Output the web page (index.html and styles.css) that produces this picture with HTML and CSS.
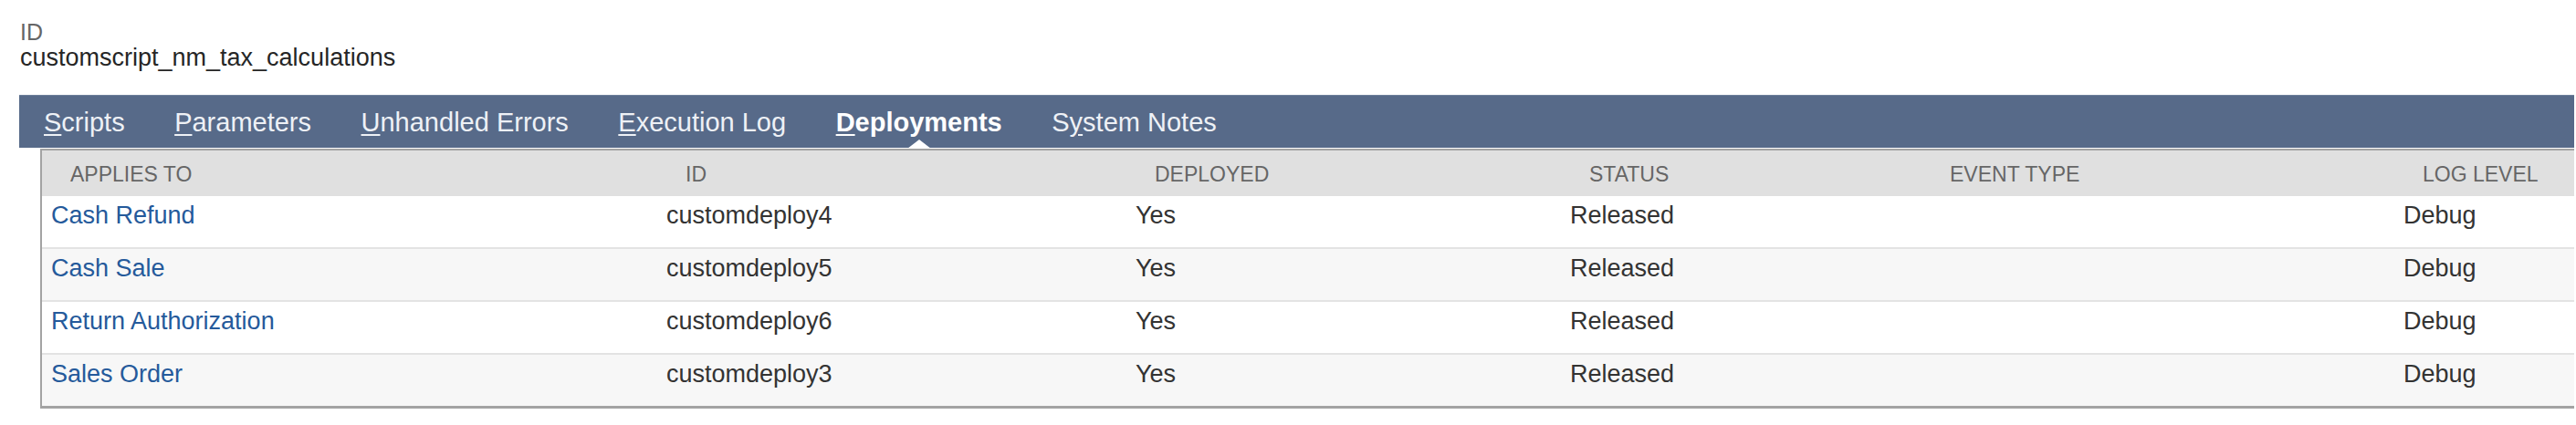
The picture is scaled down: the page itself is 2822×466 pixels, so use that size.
FILE: index.html
```html
<!DOCTYPE html>
<html lang="en">
<head>
<meta charset="utf-8">
<title>Script - Deployments</title>
<link rel="stylesheet" href="styles.css">
</head>
<body>
<div class="page">
  <div class="field">
    <div class="field-label">ID</div>
    <div class="field-value">customscript_nm_tax_calculations</div>
  </div>

  <nav class="tabs">
    <span class="tab"><u>S</u>cripts</span>
    <span class="tab"><u>P</u>arameters</span>
    <span class="tab"><u>U</u>nhandled Errors</span>
    <span class="tab"><u>E</u>xecution Log</span>
    <span class="tab active"><u>D</u>eployments</span>
    <span class="tab">S<u>y</u>stem Notes</span>
  </nav>

  <div class="grid-wrap">
    <table class="grid">
      <colgroup>
        <col class="c1"><col class="c2"><col class="c3"><col class="c4"><col class="c5"><col class="c6">
      </colgroup>
      <thead>
        <tr>
          <th>Applies To</th>
          <th>ID</th>
          <th>Deployed</th>
          <th>Status</th>
          <th>Event Type</th>
          <th>Log Level</th>
        </tr>
      </thead>
      <tbody>
        <tr>
          <td><a href="#">Cash Refund</a></td>
          <td>customdeploy4</td>
          <td>Yes</td>
          <td>Released</td>
          <td></td>
          <td>Debug</td>
        </tr>
        <tr>
          <td><a href="#">Cash Sale</a></td>
          <td>customdeploy5</td>
          <td>Yes</td>
          <td>Released</td>
          <td></td>
          <td>Debug</td>
        </tr>
        <tr>
          <td><a href="#">Return Authorization</a></td>
          <td>customdeploy6</td>
          <td>Yes</td>
          <td>Released</td>
          <td></td>
          <td>Debug</td>
        </tr>
        <tr>
          <td><a href="#">Sales Order</a></td>
          <td>customdeploy3</td>
          <td>Yes</td>
          <td>Released</td>
          <td></td>
          <td>Debug</td>
        </tr>
      </tbody>
    </table>
  </div>
</div>
</body>
</html>
```

FILE: styles.css
```css
html, body {
  margin: 0;
  padding: 0;
  background: #ffffff;
}

body {
  font-family: "Liberation Sans", Arial, Helvetica, sans-serif;
  color: #333333;
}

.page {
  padding: 21px 2px 0 21px;
}

.field {
  padding-left: 1px;
}

.field-label {
  font-size: 25px;
  line-height: 28px;
  color: #666666;
}

.field-value {
  font-size: 27px;
  line-height: 28px;
  color: #262626;
}

.tabs {
  margin-top: 27px;
  height: 58px;
  background: #576a89;
  border-top: 1px solid #6d7f9b;
  box-sizing: border-box;
  display: flex;
  align-items: center;
  gap: 54.5px;
  padding-left: 27px;
}

.tab {
  position: relative;
  font-size: 29px;
  line-height: 34px;
  color: #eef1f6;
  white-space: nowrap;
}

.tab u {
  text-decoration-thickness: 2px;
  text-underline-offset: 3px;
}

.tab.active {
  font-weight: bold;
  color: #ffffff;
}

.tab.active::after {
  content: "";
  position: absolute;
  left: 50%;
  bottom: -12px;
  margin-left: -13px;
  border-left: 13px solid transparent;
  border-right: 13px solid transparent;
  border-bottom: 10px solid #ffffff;
}

.grid-wrap {
  margin: 1px 0 0 23px;
  border-top: 2px solid #a3a3a3;
  border-left: 2px solid #a3a3a3;
  border-bottom: 3px solid #a3a3a3;
  overflow: hidden;
}

.grid {
  width: 100%;
  table-layout: fixed;
  border-collapse: collapse;
}

.c1 { width: 674px; }
.c2 { width: 514px; }
.c3 { width: 476px; }
.c4 { width: 395px; }
.c5 { width: 518px; }

.grid th {
  background: #e0e0e0;
  font-size: 23px;
  line-height: 28px;
  font-weight: normal;
  color: #666666;
  text-transform: uppercase;
  text-align: left;
  padding: 12px 0 10px 31px;
  white-space: nowrap;
}

.grid td {
  font-size: 27px;
  line-height: 32px;
  color: #333333;
  padding: 5px 10px 19px 10px;
  border-bottom: 2px solid #e3e3e3;
  white-space: nowrap;
  vertical-align: top;
}

.grid tbody tr:nth-child(even) td {
  background: #f7f7f7;
}

.grid tbody tr:last-child td {
  border-bottom: none;
}

.grid a {
  color: #255a9b;
  text-decoration: none;
}
```
